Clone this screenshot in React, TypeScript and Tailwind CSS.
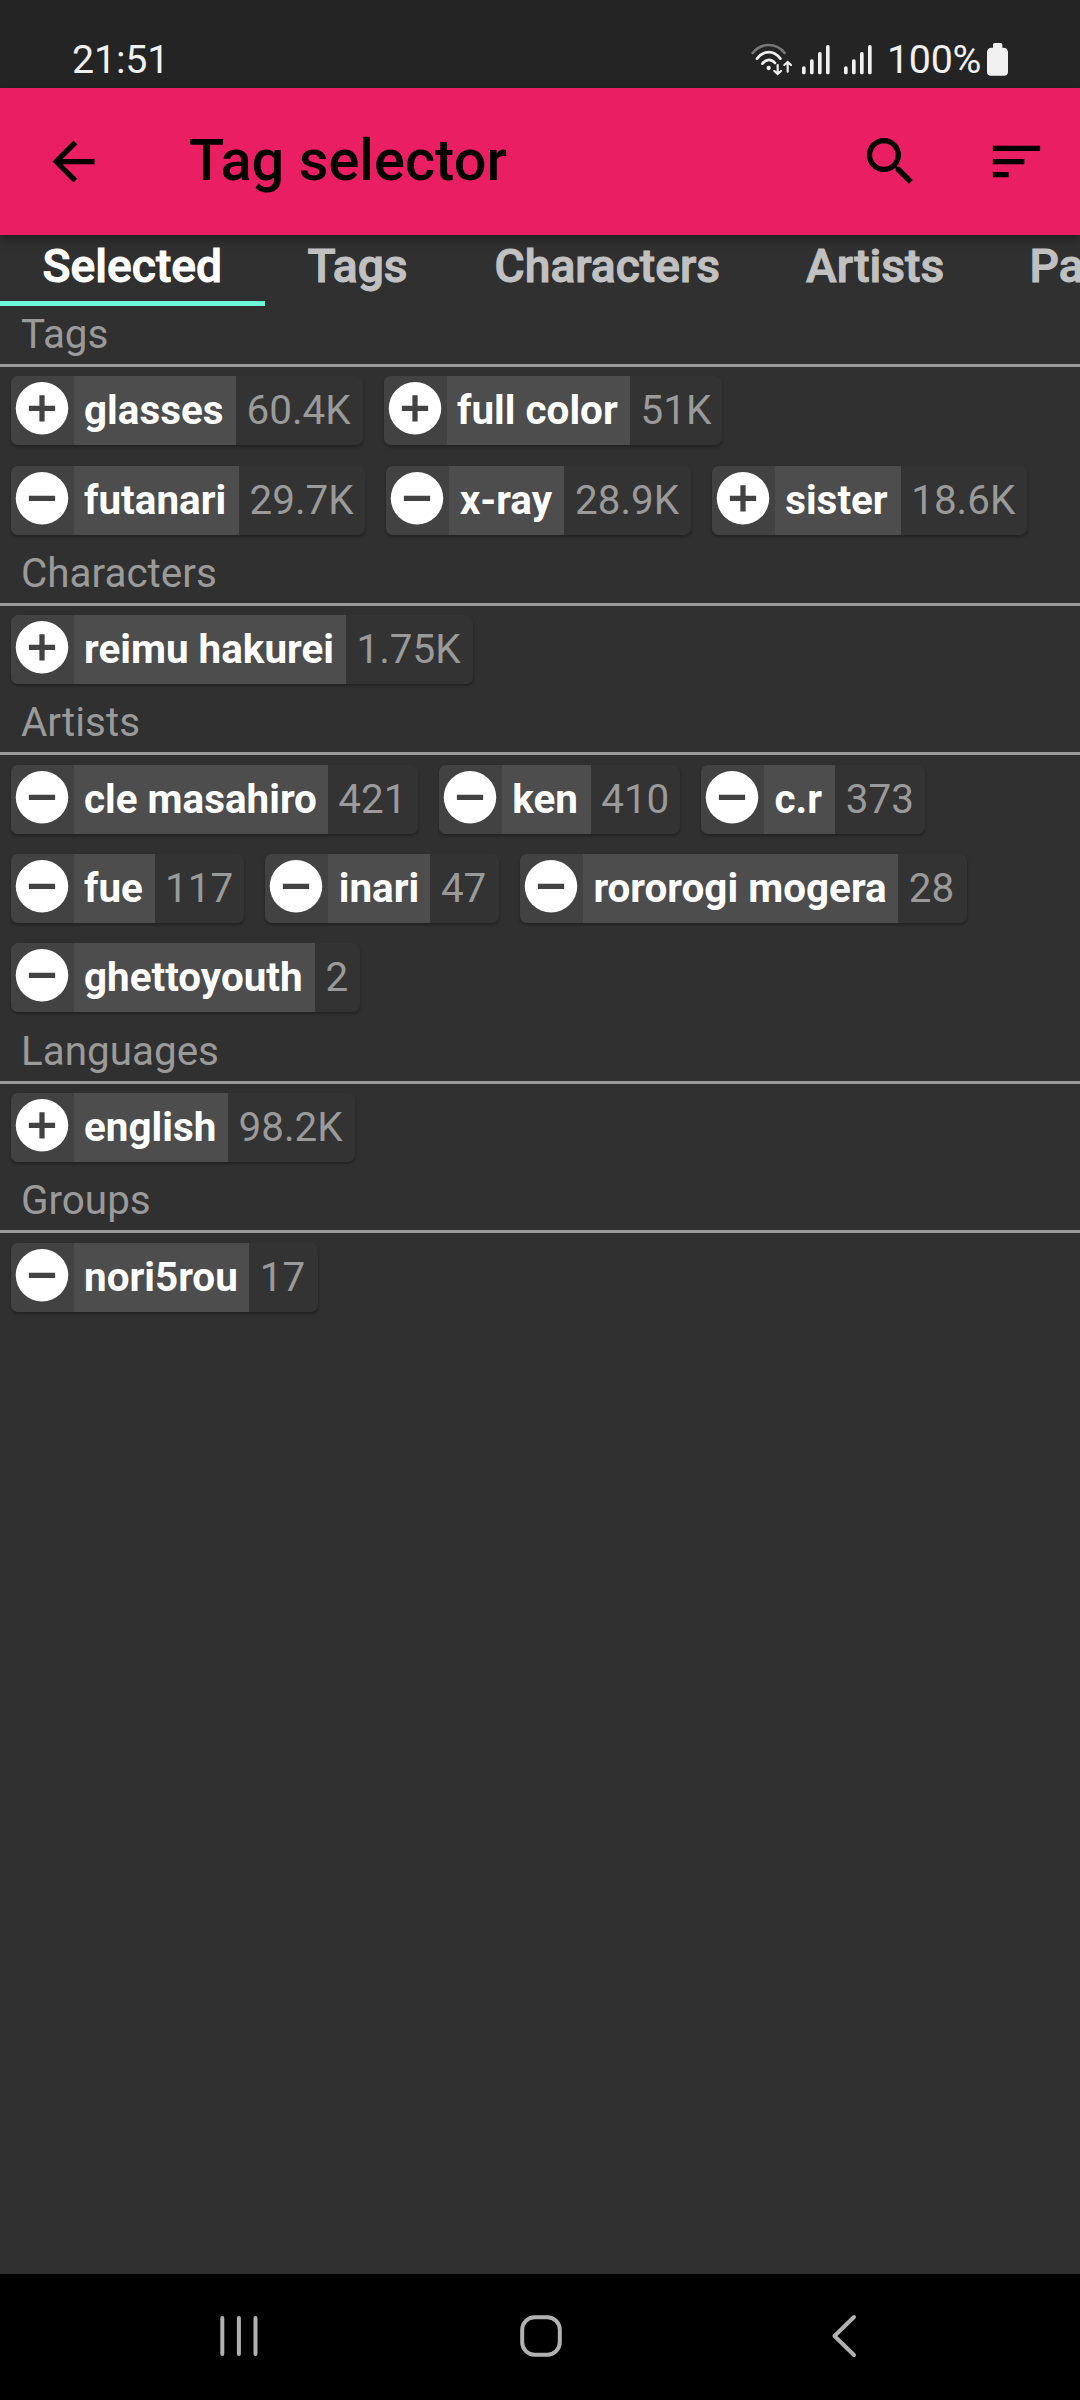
import React from "react";

type Tag = { name: string; count: string; nameWidth: string; countWidth: string; included?: boolean };
type Section = { title: string; height: string; rowsClass: string; rows: Tag[][] };

const sections: Section[] = [
  {
    title: "Tags",
    height: "h-[239px]",
    rowsClass: "gap-[21px] pt-[9px]",
    rows: [
      [
        { name: "glasses", count: "60.4K", nameWidth: "w-[162.5px]", countWidth: "w-[126.5px]", included: true },
        { name: "full color", count: "51K", nameWidth: "w-[183.6px]", countWidth: "w-[91.6px]", included: true },
      ],
      [
        { name: "futanari", count: "29.7K", nameWidth: "w-[165.5px]", countWidth: "w-[126.2px]" },
        { name: "x-ray", count: "28.9K", nameWidth: "w-[115.3px]", countWidth: "w-[126.2px]" },
        { name: "sister", count: "18.6K", nameWidth: "w-[126px]", countWidth: "w-[126.8px]", included: true },
      ],
    ],
  },
  {
    title: "Characters",
    height: "h-[149px]",
    rowsClass: "pt-[9px]",
    rows: [[{ name: "reimu hakurei", count: "1.75K", nameWidth: "w-[272.5px]", countWidth: "w-[126.8px]", included: true }]],
  },
  {
    title: "Artists",
    height: "h-[329px]",
    rowsClass: "gap-[20px] pt-[10px]",
    rows: [
      [
        { name: "cle masahiro", count: "421", nameWidth: "w-[254.3px]", countWidth: "w-[89.9px]" },
        { name: "ken", count: "410", nameWidth: "w-[89px]", countWidth: "w-[89.3px]" },
        { name: "c.r", count: "373", nameWidth: "w-[71.3px]", countWidth: "w-[89.3px]" },
      ],
      [
        { name: "fue", count: "117", nameWidth: "w-[81.1px]", countWidth: "w-[89.6px]" },
        { name: "inari", count: "47", nameWidth: "w-[102.2px]", countWidth: "w-[68.5px]" },
        { name: "rororogi mogera", count: "28", nameWidth: "w-[315.3px]", countWidth: "w-[68.5px]" },
      ],
      [{ name: "ghettoyouth", count: "2", nameWidth: "w-[241.5px]", countWidth: "w-[45px]" }],
    ],
  },
  {
    title: "Languages",
    height: "h-[149px]",
    rowsClass: "pt-[9px]",
    rows: [[{ name: "english", count: "98.2K", nameWidth: "w-[154.5px]", countWidth: "w-[127px]", included: true }]],
  },
  {
    title: "Groups",
    height: "h-[149px]",
    rowsClass: "pt-[10px]",
    rows: [[{ name: "nori5rou", count: "17", nameWidth: "w-[175.8px]", countWidth: "w-[69px]" }]],
  },
];

const tabs = [
  { label: "Selected", width: "w-[265px]" },
  { label: "Tags", width: "w-[187px]" },
  { label: "Characters", width: "w-[311.5px]" },
  { label: "Artists", width: "w-[223.5px]" },
  { label: "Parodies", width: "w-[268px]" },
];

function Signal({ className }: { className: string }) {
  return (
    <svg className={className} width="28" height="33" viewBox="0 0 84 99" fill="#f0f0f0">
      <rect x="0" y="70" width="11" height="24" rx="5" />
      <rect x="24" y="49" width="11" height="45" rx="5" />
      <rect x="48" y="27" width="11" height="67" rx="5" />
      <rect x="72" y="6" width="11" height="88" rx="5" />
    </svg>
  );
}

function StatusBar() {
  return (
    <header className="flex h-[88px] shrink-0 items-start bg-[#242424] pl-[72px] pr-[72px] pt-[37px] text-[39.4px] leading-[46px] text-[#f0f0f0]">
      <span className="tracking-[-0.2px]">21:51</span>
      <div className="ml-auto flex items-start">
        <svg className="mt-[6px]" width="42" height="33" viewBox="0 0 126 99" fill="none" strokeLinecap="round">
          <path d="M5 30C30 -2 76 -2 101 30" stroke="#777777" strokeWidth="8" />
          <path d="M18 47C38 21 68 21 88 47" stroke="#f0f0f0" strokeWidth="8" />
          <path d="M34 62C45 47 61 47 72 60" stroke="#f0f0f0" strokeWidth="8" />
          <circle cx="53" cy="75" r="6.5" fill="#f0f0f0" />
          <path d="M80 66V92M70 84L80 93L90 84" stroke="#f0f0f0" strokeWidth="6.5" />
          <path d="M110 86V58M100 66L110 57L120 66" stroke="#f0f0f0" strokeWidth="6.5" />
        </svg>
        <Signal className="ml-[9px] mt-[6px]" />
        <Signal className="ml-[14px] mt-[6px]" />
        <span className="ml-[15px] w-[100px] whitespace-nowrap tracking-[-0.3px]">100%</span>
        <svg className="mt-[6px]" width="21" height="33" viewBox="0 0 63 99" fill="#f0f0f0">
          <path d="M18 14V5Q18 0 23 0H41Q46 0 46 5V14H49Q63 14 63 28V86Q63 98 51 98H12Q0 98 0 86V28Q0 14 14 14Z" />
        </svg>
      </div>
    </header>
  );
}

function AppBar() {
  return (
    <div className="relative z-10 flex h-[147px] shrink-0 items-center bg-[#ea1e63] pl-[42px] pr-[32px] shadow-[0_4px_10px_rgba(0,0,0,0.35)]">
      <svg width="63" height="63" viewBox="0 0 24 24">
        <path d="M20 11H7.83l5.59-5.59L12 4l-8 8 8 8 1.41-1.41L7.83 13H20v-2z" />
      </svg>
      <h1 className="-mt-[4px] ml-[84px] text-[57.75px] font-medium leading-[68px] text-black">Tag selector</h1>
      <svg className="ml-auto" width="63" height="63" viewBox="0 0 24 24">
        <path d="M15.5 14h-.79l-.28-.27C15.41 12.59 16 11.11 16 9.5 16 5.91 13.09 3 9.5 3S3 5.91 3 9.5 5.91 16 9.5 16c1.61 0 3.09-.59 4.23-1.57l.27.28v.79l5 4.99L20.49 19l-4.99-5zm-6 0C7.01 14 5 11.99 5 9.5S7.01 5 9.5 5 14 7.01 14 9.5 11.99 14 9.5 14z" />
      </svg>
      <svg className="ml-[63px]" width="63" height="63" viewBox="0 0 24 24">
        <path d="M3 18h6v-2H3v2zM3 6v2h18V6H3zm0 7h12v-2H3v2z" />
      </svg>
    </div>
  );
}

function TabStrip() {
  return (
    <nav className="flex h-[71px] shrink-0 overflow-hidden text-[46.2px] font-medium leading-[54px] [-webkit-text-stroke:1px_currentColor]">
      {tabs.map((tab, i) => (
        <div
          key={tab.label}
          className={`h-[71px] shrink-0 pl-[42.6px] pt-[4px] ${tab.width} ${
            i === 0 ? "border-b-[5px] border-[#6ef9d9] text-white" : "text-[#c1c1c1]"
          }`}
        >
          {tab.label}
        </div>
      ))}
    </nav>
  );
}

function Chip({ tag }: { tag: Tag }) {
  return (
    <div className="flex h-[69px] shrink-0 overflow-hidden whitespace-nowrap rounded-[7px] bg-[#333333] text-[40.425px] leading-[48px] shadow-[0_2px_3px_rgba(0,0,0,0.3)]">
      <div className="w-[63px] shrink-0 bg-[#424242]">
        <svg width="63" height="63" viewBox="0.19 -0.29 24 24">
          <circle cx="12" cy="12" r="10" fill="#ffffff" />
          <path d={tag.included ? "M7 11h4V7h2v4h4v2h-4v4h-2v-4H7z" : "M7 11h10v2H7z"} fill="#424242" />
        </svg>
      </div>
      <span className={`${tag.nameWidth} bg-[#4d4d4d] pl-[10.5px] pt-[11px] font-bold text-white`}>{tag.name}</span>
      <span className={`${tag.countWidth} pl-[10.5px] pt-[11px] text-[#9a9a9a]`}>{tag.count}</span>
    </div>
  );
}

function TagSection({ section }: { section: Section }) {
  return (
    <section className={section.height}>
      <h2 className="h-[61px] border-b-[3px] border-[#9a9a9a] pl-[21px] pt-[5px] text-[40.425px] leading-[48px] text-[#9a9a9a]">
        {section.title}
      </h2>
      <div className={`flex flex-col pl-[10.5px] ${section.rowsClass}`}>
        {section.rows.map((row, i) => (
          <div key={i} className="flex gap-[21px]">
            {row.map((tag) => (
              <Chip key={tag.name} tag={tag} />
            ))}
          </div>
        ))}
      </div>
    </section>
  );
}

function NavBar() {
  return (
    <footer className="flex h-[126px] shrink-0 items-center bg-black pb-[2px] pl-[218px] pr-[222px]">
      <svg width="42" height="44" viewBox="0 0 42 44" stroke="#b2b2b2" strokeWidth="4" strokeLinecap="round">
        <path d="M4.3 4V40M20.9 4V40M37.5 4V40" />
      </svg>
      <svg className="ml-[259px]" width="44" height="44" viewBox="0 0 44 44" fill="none" stroke="#b2b2b2" strokeWidth="4">
        <rect x="3.2" y="3.2" width="37.6" height="37.6" rx="12.5" />
      </svg>
      <svg className="ml-auto" width="28" height="44" viewBox="0 0 28 44" fill="none" stroke="#b2b2b2" strokeWidth="4" strokeLinecap="round" strokeLinejoin="round">
        <path d="M24 3L4.5 22L24 41" />
      </svg>
    </footer>
  );
}

export default function App() {
  return (
    <div className="flex h-[2400px] w-[1080px] flex-col overflow-hidden bg-[#303030] font-['Roboto',sans-serif]">
      <StatusBar />
      <AppBar />
      <TabStrip />
      <main className="flex-1">
        {sections.map((s) => (
          <TagSection key={s.title} section={s} />
        ))}
      </main>
      <NavBar />
    </div>
  );
}
